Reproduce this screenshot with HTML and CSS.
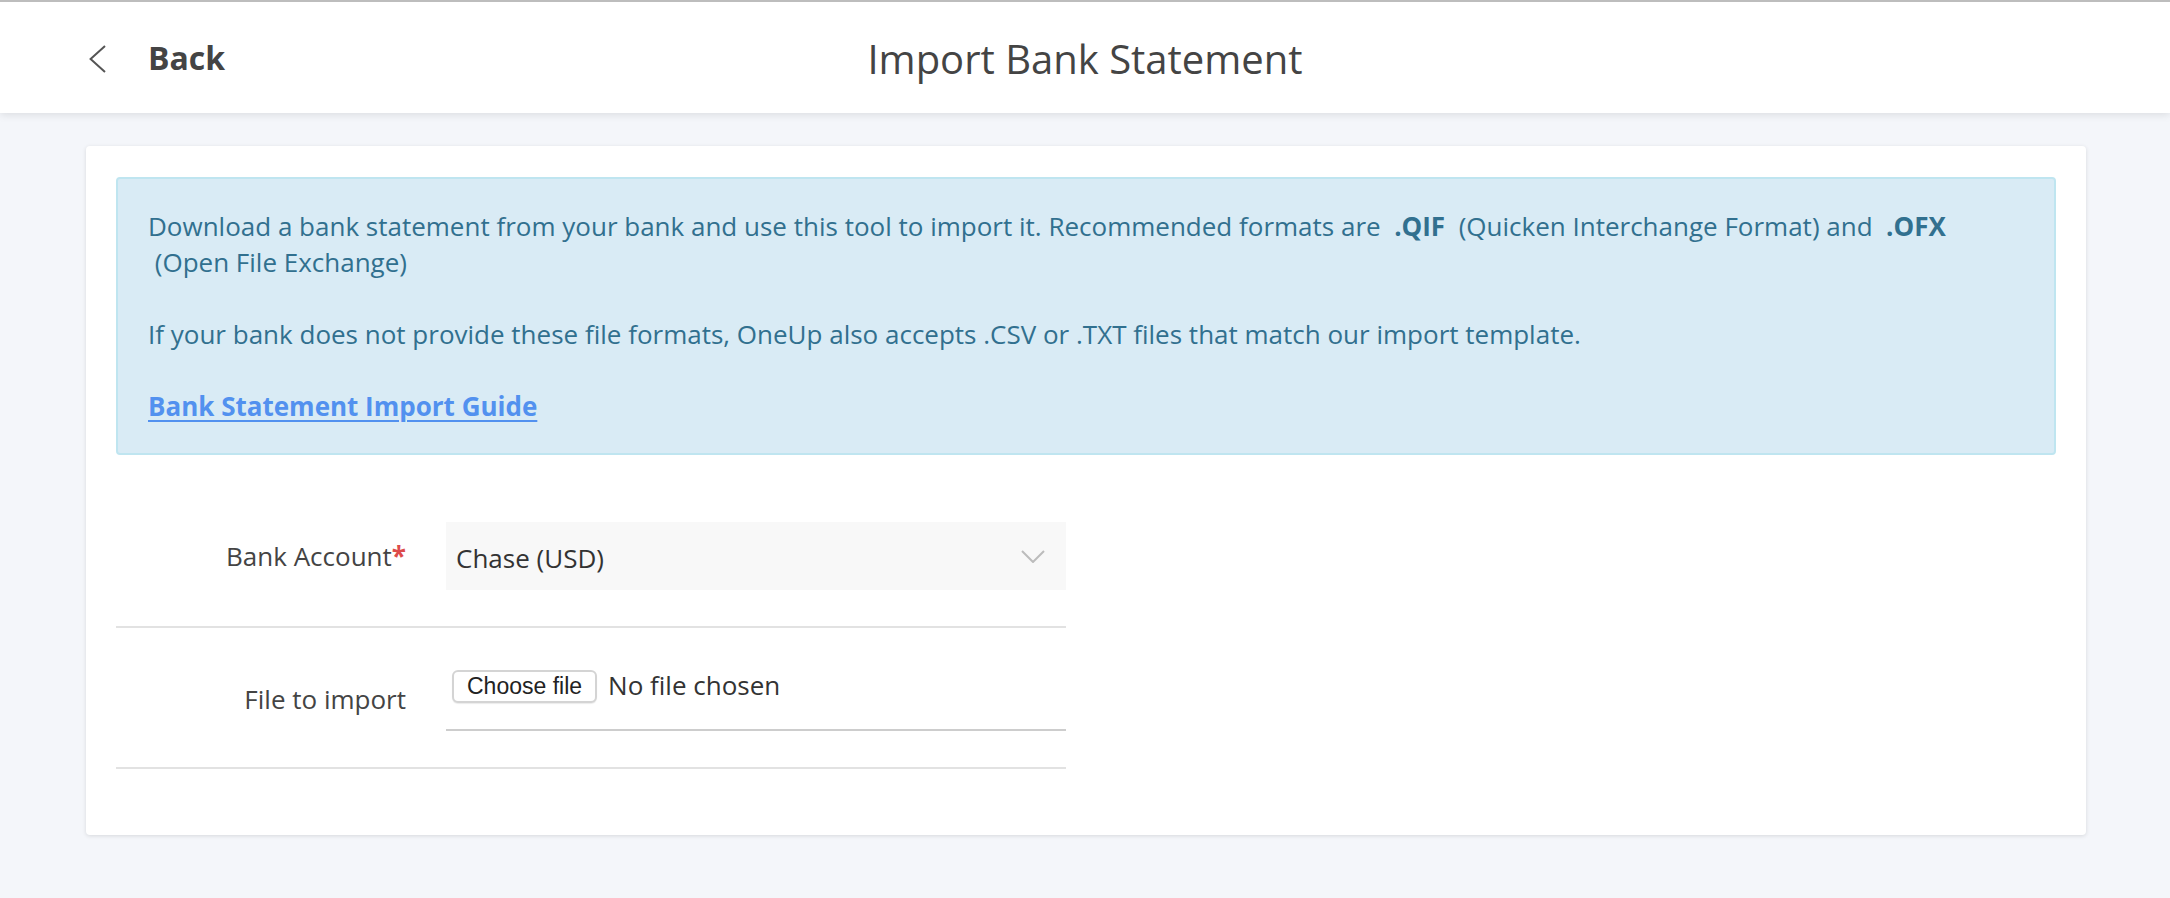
FILE: index.html
```html
<!DOCTYPE html>
<html lang="en">
<head>
<meta charset="utf-8">
<title>Import Bank Statement</title>
<link rel="stylesheet" href="styles.css">
</head>
<body>
<header class="topbar">
  <a class="back" href="#">
    <svg class="back-icon" width="17" height="28" viewBox="0 0 17 28" aria-hidden="true"><path d="M16 1 L1.6 14 L16 27" fill="none" stroke="#555" stroke-width="2"/></svg>
    <span class="back-text">Back</span>
  </a>
  <h1 class="title">Import Bank Statement</h1>
  <div class="spacer"></div>
</header>
<main class="page">
  <section class="card">
    <div class="alert">
      <p>Download a bank statement from your bank and use this tool to import it. Recommended formats are&nbsp; <b>.QIF</b> &nbsp;(Quicken Interchange Format) and&nbsp; <b>.OFX</b> &nbsp;(Open File Exchange)</p>
      <p>If your bank does not provide these file formats, OneUp also accepts .CSV or .TXT files that match our import template.</p>
      <p><a class="guide" href="#">Bank Statement Import Guide</a></p>
    </div>
    <form class="form">
      <div class="row">
        <label class="field-label">Bank Account<span class="req">*</span></label>
        <div class="select">
          <span class="select-value">Chase (USD)</span>
          <svg class="select-caret" width="24" height="13" viewBox="0 0 24 13" aria-hidden="true"><path d="M1 1 L12 12 L23 1" fill="none" stroke="#bcbcbc" stroke-width="2"/></svg>
        </div>
      </div>
      <div class="row">
        <label class="field-label field-label--file">File to import</label>
        <div class="file-field">
          <button type="button" class="file-btn">Choose file</button>
          <span class="file-name">No file chosen</span>
        </div>
      </div>
    </form>
  </section>
</main>
</body>
</html>
```
FILE: styles.css
```css
html, body {
  margin: 0;
  padding: 0;
}
body {
  background: #f4f6fa;
  font-family: "Open Sans", "Noto Sans", sans-serif;
  color: #333;
  height: 898px;
  overflow: hidden;
}
.topbar {
  height: 111px;
  border-top: 2px solid #bdbdbd;
  background: #fff;
  box-shadow: 0 2px 8px rgba(0, 0, 0, 0.10);
  display: grid;
  grid-template-columns: 1fr auto 1fr;
  align-items: center;
  position: relative;
  z-index: 1;
}
.back {
  display: flex;
  align-items: center;
  gap: 42px;
  padding-left: 89px;
  text-decoration: none;
  color: #444;
  justify-self: start;
}
.back-icon {
  display: block;
  margin-top: 2px;
}
.back-text {
  font-size: 32px;
  font-weight: 700;
  line-height: 40px;
  color: #444;
}
.title {
  margin: 0;
  font-size: 40px;
  font-weight: 400;
  line-height: 50px;
  color: #444;
  margin-top: 3px;
}
.page {
  padding: 33px 84px 0 86px;
}
.card {
  background: #fff;
  border-radius: 4px;
  box-shadow: 0 1px 4px rgba(0, 0, 0, 0.12);
  padding: 31px 30px 66px 30px;
}
.alert {
  background: #d9ebf5;
  border: 2px solid #bfe5f0;
  border-radius: 4px;
  padding: 29px 30px;
  color: #31708f;
  font-size: 26px;
  line-height: 36px;
}
.alert p {
  margin: 0 0 36px;
}
.alert p:last-child {
  margin-bottom: 0;
}
.alert b {
  font-weight: 700;
}
.guide {
  color: #5291ef;
  font-weight: 700;
  text-decoration: underline;
  text-decoration-thickness: 2px;
  text-underline-offset: 4px;
}
.form {
  margin-top: 37px;
  width: 950px;
}
.row {
  display: grid;
  grid-template-columns: 290px 620px;
  column-gap: 40px;
  align-items: center;
  padding: 30px 0 36px;
  border-bottom: 2px solid #e2e2e2;
}
.field-label {
  text-align: right;
  font-size: 26px;
  line-height: 36px;
  color: #444;
}
.field-label--file {
  padding-top: 8px;
}
.req {
  color: #dd4b4b;
  font-weight: 700;
}
.select {
  height: 68px;
  background: #f8f8f8;
  display: flex;
  align-items: center;
  justify-content: space-between;
  padding: 0 21px 0 10px;
}
.select-value {
  font-size: 26px;
  line-height: 36px;
  color: #333;
  margin-top: 4px;
}
.select-caret {
  display: block;
}
.file-field {
  display: flex;
  align-items: center;
  gap: 11px;
  padding: 12px 0 26px 6px;
  border-bottom: 2px solid #cdcdcd;
}
.file-btn {
  font-family: "Liberation Sans", Arial, sans-serif;
  font-size: 23px;
  color: #222;
  background: #fff;
  border: 2px solid #d4d4d4;
  border-radius: 6px;
  height: 33px;
  padding: 0 13px;
  line-height: 29px;
  box-shadow: 0 1px 1px rgba(0, 0, 0, 0.08);
}
.file-name {
  font-size: 26px;
  line-height: 36px;
  color: #333;
  margin-top: -4px;
}
```
